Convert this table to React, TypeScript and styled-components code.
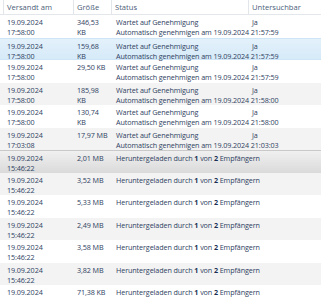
import React from 'react';
import styled, { createGlobalStyle, css } from 'styled-components';

type RowKind = 'normal' | 'selected' | 'inactive';

interface Upload {
    date: string;
    time: string;
    size: string[];
    status: 'pending' | 'downloaded';
    approveAt?: string;
    checkable?: string;
}

const uploads: Upload[] = [
    { date: '19.09.2024', time: '17:58:00', size: ['346,53', 'KB'], status: 'pending', approveAt: '19.09.2024 21:57:59', checkable: 'Ja' },
    { date: '19.09.2024', time: '17:58:00', size: ['159,68', 'KB'], status: 'pending', approveAt: '19.09.2024 21:57:59', checkable: 'Ja' },
    { date: '19.09.2024', time: '17:58:00', size: ['29,50 KB'], status: 'pending', approveAt: '19.09.2024 21:57:59', checkable: 'Ja' },
    { date: '19.09.2024', time: '17:58:00', size: ['185,98', 'KB'], status: 'pending', approveAt: '19.09.2024 21:58:00', checkable: 'Ja' },
    { date: '19.09.2024', time: '17:58:00', size: ['130,74', 'KB'], status: 'pending', approveAt: '19.09.2024 21:58:00', checkable: 'Ja' },
    { date: '19.09.2024', time: '17:03:08', size: ['17,97 MB'], status: 'pending', approveAt: '19.09.2024 21:03:03', checkable: 'Ja' },
    { date: '19.09.2024', time: '15:46:22', size: ['2,01 MB'], status: 'downloaded' },
    { date: '19.09.2024', time: '15:46:22', size: ['3,52 MB'], status: 'downloaded' },
    { date: '19.09.2024', time: '15:46:22', size: ['5,33 MB'], status: 'downloaded' },
    { date: '19.09.2024', time: '15:46:22', size: ['2,49 MB'], status: 'downloaded' },
    { date: '19.09.2024', time: '15:46:22', size: ['3,58 MB'], status: 'downloaded' },
    { date: '19.09.2024', time: '15:46:22', size: ['3,82 MB'], status: 'downloaded' },
    { date: '19.09.2024', time: '15:41:17', size: ['71,38 KB'], status: 'downloaded' },
];

// row 2 is the focused selection, row 7 the one selected before focus moved
function kindOf(index: number): RowKind {
    if (index === 1) return 'selected';
    if (index === 6) return 'inactive';
    return 'normal';
}

export default function App() {
    return (
        <>
            <GlobalStyle />
            <ListView>
                <HeaderRow>
                    <HeaderCell />
                    <HeaderCell>Versandt am</HeaderCell>
                    <HeaderCell>Größe</HeaderCell>
                    <HeaderCell>Status</HeaderCell>
                    <HeaderCell>Untersuchbar</HeaderCell>
                </HeaderRow>
                {uploads.map((u, i) => (
                    <Row key={i} $kind={kindOf(i)} $odd={i % 2 === 1}>
                        <span />
                        <Cell>
                            <Line>{u.date}</Line>
                            <Line>{u.time}</Line>
                        </Cell>
                        <Cell>
                            {u.size.map((s, j) => <Line key={j}>{s}</Line>)}
                        </Cell>
                        <StatusCell>
                            {u.status === 'pending' ? (
                                <>
                                    <Line>Wartet auf Genehmigung</Line>
                                    <Line>Automatisch genehmigen am {u.approveAt}</Line>
                                </>
                            ) : (
                                <Line>
                                    Heruntergeladen durch <Strong>1</Strong> von <Strong>2</Strong> Empfängern
                                </Line>
                            )}
                        </StatusCell>
                        <Cell>{u.checkable && <Line>{u.checkable}</Line>}</Cell>
                    </Row>
                ))}
            </ListView>
        </>
    );
}

const GlobalStyle = createGlobalStyle`
    html, body {
        margin: 0;
        padding: 0;
        background: #ffffff;
        overflow: hidden;
    }
    body {
        font-family: "Open Sans", "Noto Sans", sans-serif;
    }
`

const columns = css`
    display: grid;
    grid-template-columns: 4px 70px 38px 137px 1fr;
`

const ListView = styled.div`
    width: 321px;
    height: 300px;
    overflow: hidden;
    font-size: 7.2px;
    letter-spacing: -0.1px;
    color: #2f4262;
`

const HeaderRow = styled.div`
    ${columns}
    height: 14px;
    border-bottom: 1px solid #e3e6ea;
    background: #ffffff;
`

const HeaderCell = styled.div`
    border-right: 1px solid #e2e5e9;
    padding-left: 3px;
    line-height: 14px;
    font-size: 7.6px;
    letter-spacing: 0;
    color: #4b5d78;
    white-space: nowrap;
    overflow: hidden;

    &:last-child {
        border-right: none;
    }
`

const Row = styled.div<{ $kind: RowKind; $odd: boolean }>`
    ${columns}
    height: 22.5px;
    box-sizing: border-box;
    background: ${p => (p.$odd ? '#f3f3f3' : '#ffffff')};

    ${p => p.$kind === 'selected' && css`
        background: linear-gradient(#e3f1fb, #d6eaf8);
        border-top: 1px solid #cde5f6;
        border-bottom: 1px solid #cde5f6;
    `}

    ${p => p.$kind === 'inactive' && css`
        background: linear-gradient(#f0f0f0, #dadada);
        border-top: 1px solid #c9c9c9;
    `}
`

const Cell = styled.div`
    padding: 2px 0 0 3px;
    overflow: hidden;
    white-space: nowrap;
`

// status text runs on over the next column, as in the original list view
const StatusCell = styled.div`
    padding: 2px 0 0 4px;
    white-space: nowrap;
`

const Line = styled.div`
    line-height: 10px;
`

const Strong = styled.b`
    color: #1b2f55;
`
